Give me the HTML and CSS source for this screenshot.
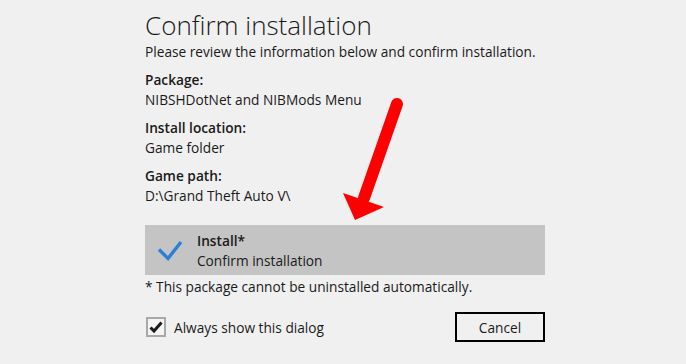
FILE: index.html
```html
<!DOCTYPE html>
<html lang="en">
<head>
    <meta charset="UTF-8">
    <title>Confirm installation</title>
    <link rel="stylesheet" href="styles.css">
</head>
<body>
    <div class="dialog">
        <h1>Confirm installation</h1>
        <p class="intro">Please review the information below and confirm installation.</p>

        <div class="info">
            <div class="label">Package:</div>
            <div class="value">NIBSHDotNet and NIBMods Menu</div>
        </div>
        <div class="info">
            <div class="label">Install location:</div>
            <div class="value">Game folder</div>
        </div>
        <div class="info">
            <div class="label">Game path:</div>
            <div class="value">D:\Grand Theft Auto V\</div>
        </div>

        <div class="option">
            <svg class="option-check" width="26" height="22" viewBox="0 0 26 22">
                <path d="M2 9.5 L11 18.5 L24 2" fill="none" stroke="#2b7fd6" stroke-width="3.4"/>
            </svg>
            <div class="option-text">
                <div class="option-title">Install*</div>
                <div class="option-desc">Confirm installation</div>
            </div>
        </div>
        <p class="note">* This package cannot be uninstalled automatically.</p>

        <div class="footer">
            <label class="always">
                <span class="checkbox">
                    <svg width="16" height="16" viewBox="0 0 16 16">
                        <path d="M2.5 8.5 L6 12 L13.5 3.5" fill="none" stroke="#1a1a1a" stroke-width="3"/>
                    </svg>
                </span>
                Always show this dialog
            </label>
            <button class="cancel">Cancel</button>
        </div>

        <!-- red pointer drawn over the dialog -->
        <svg class="pointer" width="686" height="364" viewBox="0 0 686 364">
            <line x1="397" y1="104" x2="364" y2="198" stroke="#ff0000" stroke-width="12" stroke-linecap="round"/>
            <polygon points="343,193 384,207 355,220" fill="#ff0000"/>
        </svg>
    </div>
</body>
</html>
```

FILE: styles.css
```css
body {
    margin: 0;
    background-color: #f0f0f0;
    color: #1a1a1a;
    font-family: 'Open Sans', 'Noto Sans', sans-serif;
    font-size: 13.7px;
}
.dialog {
    position: relative;
    width: 400px;
    height: 364px;
    padding-left: 145px;
}
h1 {
    margin: 0;
    padding-top: 8px;
    font-size: 26px;
    font-weight: 300;
    line-height: 34px;
}
.intro {
    margin: 0 0 3px;
    line-height: 20px;
}
.info {
    margin-top: 8px;
}
.label {
    font-weight: 600;
    line-height: 20px;
}
.value {
    line-height: 20px;
}
.option {
    display: flex;
    align-items: center;
    height: 50px;
    margin-top: 19px;
    background-color: #c4c4c4;
}
.option-check {
    margin: 2px 14px 0 12px;
}
.option-text {
    line-height: 20px;
    padding-top: 1px;
}
.option-title {
    font-weight: 600;
}
.note {
    margin: 2px 0 0;
    line-height: 20px;
}
.footer {
    display: flex;
    align-items: center;
    justify-content: space-between;
    margin-top: 15px;
}
.always {
    display: flex;
    align-items: center;
    gap: 8px;
    margin-left: 1px;
}
.checkbox {
    display: flex;
    align-items: center;
    justify-content: center;
    width: 16px;
    height: 16px;
    border: 2px solid #a8a8a8;
    background-color: #f4f4f4;
}
.cancel {
    width: 90px;
    height: 30px;
    border: 2px solid #000;
    background-color: #f0f0f0;
    font-family: inherit;
    font-size: 13.7px;
    color: #1a1a1a;
}
.pointer {
    position: absolute;
    left: 0;
    top: 0;
    pointer-events: none;
}
```
